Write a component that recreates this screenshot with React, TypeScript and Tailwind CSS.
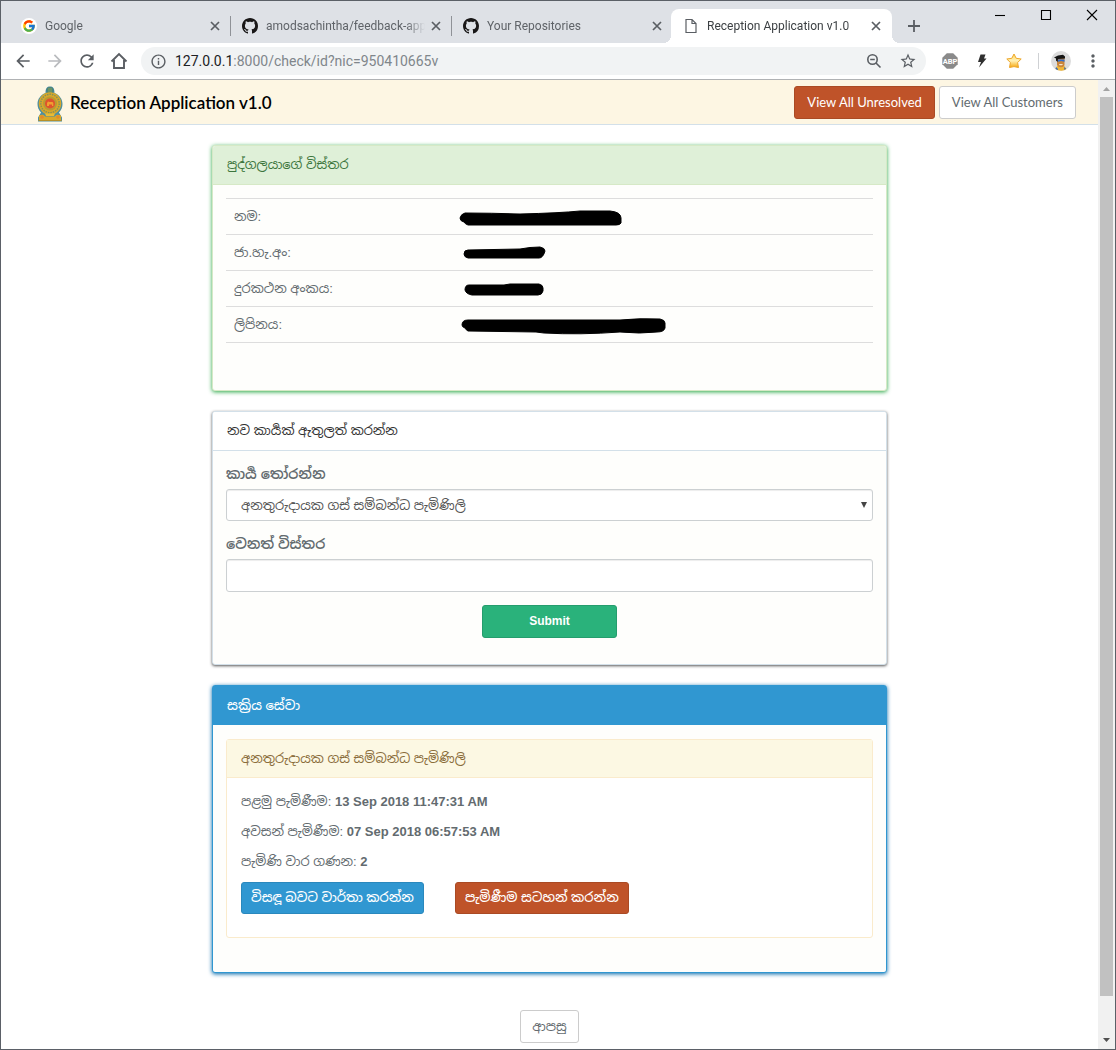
import React from "react";
import { FcGoogle } from "react-icons/fc";
import {
  MdArrowBack,
  MdArrowForward,
  MdRefresh,
  MdInfoOutline,
  MdStarBorder,
  MdMoreVert,
} from "react-icons/md";

const X = () => (
  <svg viewBox="0 0 10 10" className="size-[10px]" fill="none" stroke="#5a5e63" strokeWidth="1.7">
    <path d="M1 1l8 8M9 1L1 9" />
  </svg>
);

const GithubMark = () => (
  <svg viewBox="0 0 16 16" className="size-4 shrink-0" fill="#191717">
    <path d="M8 0C3.58 0 0 3.58 0 8c0 3.54 2.29 6.53 5.47 7.59.4.07.55-.17.55-.38 0-.19-.01-.82-.01-1.49-2.01.37-2.53-.49-2.69-.94-.09-.23-.48-.94-.82-1.13-.28-.15-.68-.52-.01-.53.63-.01 1.08.58 1.23.82.72 1.21 1.87.87 2.33.66.07-.52.28-.87.51-1.07-1.78-.2-3.64-.89-3.64-3.95 0-.87.31-1.59.82-2.15-.08-.2-.36-1.02.08-2.12 0 0 .67-.21 2.2.82.64-.18 1.32-.27 2-.27s1.36.09 2 .27c1.53-1.04 2.2-.82 2.2-.82.44 1.1.16 1.92.08 2.12.51.56.82 1.27.82 2.15 0 3.07-1.87 3.75-3.65 3.95.29.25.54.73.54 1.48 0 1.07-.01 1.93-.01 2.2 0 .21.15.46.55.38A8.01 8.01 0 0 0 16 8c0-4.42-3.58-8-8-8z" />
  </svg>
);

const GoogleIcon = () => (
  <span className="flex size-4 shrink-0 items-center justify-center rounded-full bg-white">
    <FcGoogle size={14} />
  </span>
);

const PageIcon = () => (
  <svg viewBox="0 0 16 16" className="size-4 shrink-0" fill="none" stroke="#5a5e63" strokeWidth="1.2">
    <path d="M3 1.5h6l4 4v9H3zM9 1.5v4h4" />
  </svg>
);

const Emblem = () => (
  <svg viewBox="0 0 26 36" className="mt-1 h-9 w-[26px] shrink-0" role="img" aria-label="State emblem">
    <path d="M8.500 7C8.500 2 10 .5 13 .5S17.500 2 17.500 7c5 2 8 6 8 11 0 3-1 6-3.500 8.500l3 5V35.500H1v-4l3-5C1.500 24 .5 21 .5 18c0-5 3-9 8-11z" fill="#4f8fa0" />
    <circle cx="13" cy="4.500" r="3.600" fill="#3c7f86" />
    <path d="M10.500 3h5M10.500 5h5M12 1.500v6M14 1.500v6" stroke="#9aa84b" strokeWidth=".6" />
    <circle cx="13" cy="17.500" r="11.200" fill="#d9a829" />
    <circle cx="13" cy="17.500" r="9.200" fill="none" stroke="#84905b" strokeWidth="1.500" strokeDasharray="1.500 1" />
    <circle cx="13" cy="17.500" r="7" fill="#b99a34" />
    <circle cx="13" cy="17.500" r="5" fill="#e0522d" />
    <path d="M10 20v-3l1-1.500 1.500.5h3l.8 1v3h-1.300v-1.500h-3V20z" fill="#f0a030" />
    <path d="M2 29.500c3-1.500 5-1 6 1h10c1-2 3-2.500 6-1v5H2z" fill="#d9a829" />
    <circle cx="5" cy="31" r="1.800" fill="#e38a2c" />
    <circle cx="21" cy="31" r="1.800" fill="#e38a2c" />
    <path d="M8 27.500h10l-1 2.500H9z" fill="#e8bb35" />
    <path d="M1.500 34.500h23" stroke="#b58f28" strokeWidth="1" />
  </svg>
);

type TabProps = { icon: React.ReactNode; title: string; active?: boolean; separator?: boolean };

const Tab = ({ icon, title, active, separator }: TabProps) => (
  <div
    className={
      "relative flex h-[34px] w-[221px] min-w-0 items-center pl-3 " +
      (active ? "-ml-px rounded-t-lg bg-white pr-[11px] text-[#3c4043]" : "pr-2.5 text-[#5f6368]")
    }
  >
    {active && (
      <>
        <span className="absolute bottom-0 -left-2 size-2 bg-[radial-gradient(circle_at_0_0,#dee1e6_8px,#fff_8px)]" />
        <span className="absolute bottom-0 -right-2 size-2 bg-[radial-gradient(circle_at_100%_0,#dee1e6_8px,#fff_8px)]" />
      </>
    )}
    {icon}
    <button className="ml-2 min-w-0 flex-1 overflow-hidden text-left text-xs whitespace-nowrap [mask-image:linear-gradient(to_right,#000_88%,transparent)]">
      {title}
    </button>
    <button aria-label={"Close " + title} className="ml-1.5">
      <X />
    </button>
    {separator && <span className="absolute top-[7px] -right-px h-5 w-px bg-[#8f9297]" />}
  </div>
);

const ToolButton = ({ label, children }: { label: string; children: React.ReactNode }) => (
  <button aria-label={label} className="flex size-8 shrink-0 items-center justify-center text-[#5a5e63]">
    {children}
  </button>
);

const windowControls = [
  { label: "Minimize", d: "M0 5.500h10" },
  { label: "Maximize", d: "M.5.5h9v9h-9z" },
  { label: "Close window", d: "M0 0l10 10M10 0L0 10" },
];

const BrowserBar = () => (
  <header className="font-['Roboto',sans-serif]">
    <div className="flex h-[42px] items-start justify-between bg-[#dee1e6]">
      <div className="flex min-w-0 flex-1 items-center pt-2 pl-2">
        <Tab icon={<GoogleIcon />} title="Google" separator />
        <Tab icon={<GithubMark />} title="amodsachintha/feedback-app" separator />
        <Tab icon={<GithubMark />} title="Your Repositories" />
        <Tab icon={<PageIcon />} title="Reception Application v1.0" active />
        <button aria-label="New tab" className="ml-4 shrink-0">
          <svg viewBox="0 0 12 12" className="size-3" stroke="#5a5e63" strokeWidth="1.800">
            <path d="M6 0v12M0 6h12" />
          </svg>
        </button>
      </div>
      <div className="flex shrink-0">
        {windowControls.map(({ label, d }) => (
          <button key={label} aria-label={label} className="flex h-7 w-[46px] items-center justify-center">
            <svg viewBox="0 0 10 10" className="size-[10px] overflow-visible" fill="none" stroke="#000" strokeWidth="1.100">
              <path d={d} />
            </svg>
          </button>
        ))}
      </div>
    </div>
    <div className="flex h-9 items-center bg-white px-1.5">
      <ToolButton label="Back"><MdArrowBack size={20} /></ToolButton>
      <ToolButton label="Forward"><MdArrowForward size={20} className="text-[#b9bbbe]" /></ToolButton>
      <ToolButton label="Reload"><MdRefresh size={20} /></ToolButton>
      <ToolButton label="Home">
        <svg viewBox="0 0 18 18" className="size-[18px]" fill="none" stroke="#5a5e63" strokeWidth="1.900">
          <path d="M1.500 9.500L9 2l7.500 7.500M4 8v8h10V8" />
        </svg>
      </ToolButton>
      <div className="ml-1.5 flex h-7 min-w-0 flex-1 items-center rounded-full bg-[#f1f3f4] px-[9px] text-[#5a5e63]">
        <MdInfoOutline size={17} className="shrink-0" />
        <div className="ml-2 flex-1 truncate text-sm text-[#80868b]">
          <span className="text-[#202124]">127.0.0.1</span>:8000/check/id?nic=950410665v
        </div>
        <button aria-label="Zoom">
          <svg viewBox="0 0 16 16" className="size-4" fill="none" stroke="#5a5e63" strokeWidth="1.600">
            <circle cx="6.500" cy="6.500" r="4.700" />
            <path d="M10 10l4.500 4.500M4.200 6.500h4.600" />
          </svg>
        </button>
        <button aria-label="Bookmark this page" className="ml-[17px]"><MdStarBorder size={18} /></button>
      </div>
      <div className="ml-2 flex items-center">
        <ToolButton label="Ad blocker">
          <svg viewBox="0 0 16 16" className="size-4">
            <path d="M4.800.3h6.400l4.500 4.500v6.400l-4.500 4.500H4.800L.3 11.200V4.800z" fill="#8a8a8a" />
            <text x="8" y="10.800" textAnchor="middle" fontSize="7.500" fontWeight="700" fill="#fff" fontFamily="Roboto, sans-serif">ABP</text>
          </svg>
        </ToolButton>
        <ToolButton label="Lightning">
          <svg viewBox="0 0 12 14" className="h-3.5 w-3" fill="#2f2f2f">
            <path d="M4.500.5h5L8 4.500h2.500L3 13.500 5 8H2z" />
          </svg>
        </ToolButton>
        <ToolButton label="Favourites">
          <svg viewBox="0 0 16 16" className="size-4">
            <defs>
              <linearGradient id="gold" x1="0" y1="0" x2="0" y2="1">
                <stop offset="0" stopColor="#ffd95e" />
                <stop offset=".5" stopColor="#fff0b5" />
                <stop offset="1" stopColor="#f6a80f" />
              </linearGradient>
            </defs>
            <path d="M8 1l2.200 4.300 5 .7-3.600 3.500.9 5L8 13.600l-4.500.9.9-5L.8 6l5-.7z" fill="url(#gold)" stroke="#eda62a" strokeLinejoin="round" />
          </svg>
        </ToolButton>
        <span className="ml-2 h-4 w-px bg-[#cfd1d4]" />
        <button aria-label="Profile" className="mr-1.5 ml-3 shrink-0">
          <svg viewBox="0 0 20 20" className="size-5">
            <circle cx="10" cy="10" r="10" fill="#dcdcdc" />
            <path d="M4.500 18l1.500-3 7-.5 2.500 3.500c-3 2.500-8 2-11 0z" fill="#f0b73a" />
            <path d="M6 7h7.500v7c-1 3-6 3-7.500 0z" fill="#c9853b" />
            <path d="M3 6.500L7 4.500l5-.7 2 1.700v2L7 8l-.5 3L5 9.500V7.500z" fill="#151515" />
            <path d="M7 8.500h6.500v2.300L10 10l-3 .8z" fill="#2f6fd0" />
            <path d="M8 13h4l-1 1.300H8.500z" fill="#f4e6d0" />
            <path d="M5 16l2 2v1l-2.500-1zM13 16l2 1.500-1.500 1.500z" fill="#3569b8" />
          </svg>
        </button>
        <ToolButton label="Menu"><MdMoreVert size={20} /></ToolButton>
      </div>
    </div>
  </header>
);

const rows = [
  {
    label: "නම:",
    width: 162,
    d: "M0 8Q1 4 5 3Q30 3 60 4Q100 3 120 1L150 1Q161 2 161 8L161 13Q160 15 156 15L8 15Q5 14 4 12Q0 11 0 8z",
  },
  {
    label: "ජා.හැ.අං:",
    width: 86,
    d: "M4 8Q4 4 8 4L60 3Q70 1 80 1Q85 2 85 5Q83 12 79 12L8 12Q4 11 4 8z",
  },
  {
    label: "දුරකථන අංකය:",
    width: 84,
    d: "M5 8Q5 3 9 3L44 3 50 2 79 2Q83 3 83 6L83 9Q82 13 78 13L12 13Q6 12 5 8z",
  },
  {
    label: "ලිපිනය:",
    width: 206,
    d: "M2 7Q2 2 8 2L160 2Q180 0 200 1Q205 2 205 5L205 10Q204 14 197 14Q180 16 160 14Q120 17 84 15L76 14 8 13Q6 12 5 10Q2 9 2 7z",
  },
];

const CustomerPanel = () => (
  <section className="rounded-[3px] border border-[#d6e9c6] bg-[#fefefc] pb-[47px] shadow-[0_1px_4px_#28a745]">
    <h2 className="rounded-t-[2px] border-b border-[#d6e9c6] bg-[#dff0d8] px-3.5 py-2.5 leading-[18px] text-[#3c763d]">
      පුද්ගලයාගේ විස්තර
    </h2>
    <div className="px-[13px] pt-[13px]">
      <table className="w-full border-b border-[#ddd]">
        <tbody>
          {rows.map((r) => (
            <tr key={r.label} className="h-9 border-t border-[#ddd]">
              <th scope="row" className="w-[35%] px-2 text-left font-normal">{r.label}</th>
              <td className="px-2 pt-0.5">
                <svg width={r.width} height="16" viewBox={`0 0 ${r.width} 16`} className="block overflow-visible" role="img" aria-label="Redacted">
                  <path d={r.d} stroke="#000" strokeLinejoin="round" />
                </svg>
              </td>
            </tr>
          ))}
        </tbody>
      </table>
    </div>
  </section>
);

const field =
  "block w-full rounded-[3px] border border-[#ccd0d2] bg-white text-[#555] shadow-[inset_0_1px_1px_rgba(0,0,0,0.075)]";

const NewTaskPanel = () => (
  <section className="rounded-[3px] border border-[#d3e0e9] bg-[#fefefc] shadow-[0_1px_3px_#555]">
    <h2 className="rounded-t-[2px] border-b border-[#d3e0e9] bg-white px-3.5 py-2.5 leading-[18px] text-[#333]">
      නව කාර්‍යක් ඇතුලත් කරන්න
    </h2>
    <form className="px-[13px] pt-[13px] pb-[26px]" onSubmit={(e) => e.preventDefault()}>
      <label htmlFor="task" className="block pb-[5px] text-sm leading-5 font-semibold">කාර්‍ය තෝරන්න</label>
      <div className="relative">
        <select id="task" className={field + " h-8 appearance-none px-3.5 pt-0.5"}>
          <option>අනතුරුදායක ගස් සම්බන්ධ පැමිණිලි</option>
        </select>
        <svg viewBox="0 0 6 6" className="pointer-events-none absolute top-[13px] right-1.5 size-1.5" fill="#444">
          <path d="M0 0h6L3 6z" />
        </svg>
      </div>
      <label htmlFor="details" className="block pt-[13px] pb-[5px] text-sm leading-5 font-semibold">වෙනත් විස්තර</label>
      <input id="details" type="text" className={field + " h-[33px] px-3"} />
      <button className="mx-auto mt-[13px] block h-[33px] w-[135px] rounded-[3px] border border-[#259d6d] bg-[#2ab27b] pb-0.5 text-xs font-bold text-white">
        Submit
      </button>
    </form>
  </section>
);

const ServicesPanel = () => (
  <section className="rounded-[3px] border border-[#3097d1] bg-[#fefefc] shadow-[0_1px_4px_#0067a8]">
    <h2 className="bg-[#3097d1] px-3.5 py-2.5 leading-[19px] font-medium text-white">සක්‍රිය සේවා</h2>
    <div className="px-[13px] pt-3.5 pb-[34px]">
      <article className="rounded-[3px] border border-[#faebcc] bg-white">
        <h3 className="border-b border-[#faebcc] bg-[#fcf8e3] px-3.5 py-2.5 leading-[17px] text-[#8a6d3b]">
          අනතුරුදායක ගස් සම්බන්ධ පැමිණිලි
        </h3>
        <div className="px-3.5 pt-[15px] pb-[23px]">
          <div className="flex flex-col gap-3 leading-[18px]">
            <p>පළමු පැමිණීම: <b>13 Sep 2018 11:47:31 AM</b></p>
            <p>අවසන් පැමිණීම: <b>07 Sep 2018 06:57:53 AM</b></p>
            <p>පැමිණි වාර ගණන: <b>2</b></p>
          </div>
          <div className="mt-[11px] flex gap-[31px]">
            <button className="h-8 rounded-[3px] border border-[#2a88bd] bg-[#3097d1] px-[9px] font-medium whitespace-nowrap text-white">
              විසඳූ බවට වාර්තා කරන්න
            </button>
            <button className="h-8 rounded-[3px] border border-[#aa4a24] bg-[#bf5329] px-[9px] font-medium whitespace-nowrap text-white">
              පැමිණීම සටහන් කරන්න
            </button>
          </div>
        </div>
      </article>
    </div>
  </section>
);

const ScrollBar = () => (
  <div className="flex w-[17px] shrink-0 flex-col items-center bg-[#f1f1f1]" aria-hidden="true">
    <svg viewBox="0 0 17 17" className="size-[17px] shrink-0" fill="#a3a3a3"><path d="M5 11h7L8.500 7z" /></svg>
    <div className="w-[13px] flex-1 bg-[#c1c1c1]" />
    <div className="h-9 shrink-0" />
    <svg viewBox="0 0 17 17" className="size-[17px] shrink-0" fill="#505050"><path d="M5 6h7L8.500 10z" /></svg>
  </div>
);

export default function App() {
  return (
    <div className="flex min-h-screen flex-col border border-[#5b6067] bg-white">
      <BrowserBar />
      <div className="flex flex-1 border-t border-[#b0b2b4] font-['Liberation_Sans','Noto_Sans_Sinhala',sans-serif] text-[13px] text-[#636b6f]">
        <div className="min-w-0 flex-1">
          <nav className="flex h-[45px] items-center border-b border-[#d3e0e9] bg-[#fdf6e3] pr-[22px] pl-9 font-['Lato',sans-serif]">
            <Emblem />
            <a href="#" className="mt-0.5 ml-[7px] text-[17px] font-semibold text-black">Reception Application v1.0</a>
            <div className="ml-auto flex gap-1">
              <button className="h-[33px] rounded-[3px] border border-[#aa4a24] bg-[#bf5329] px-3 pt-0.5 text-white">
                View All Unresolved
              </button>
              <button className="h-[33px] rounded-[3px] border border-[#ccc] bg-white px-3 pt-0.5 text-[#636b6f]">
                View All Customers
              </button>
            </div>
          </nav>
          <main className="mx-auto flex max-w-[675px] flex-col gap-5 pt-5">
            <CustomerPanel />
            <NewTaskPanel />
            <ServicesPanel />
            <button className="mx-auto mt-[17px] h-[33px] rounded-[3px] border border-[#ccc] bg-white px-[11px]">
              ආපසු
            </button>
          </main>
        </div>
        <ScrollBar />
      </div>
    </div>
  );
}
